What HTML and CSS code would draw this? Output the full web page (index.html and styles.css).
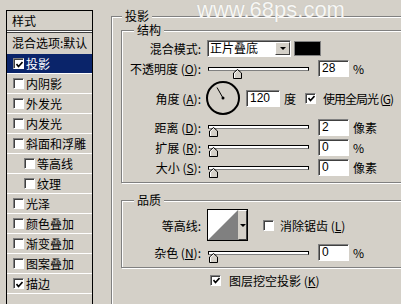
FILE: index.html
```html
<!DOCTYPE html>
<html>
  <head>
    <meta charset="utf-8">
    <title>图层样式 - 投影</title>
    <link rel="stylesheet" href="styles.css">
  </head>
  <body>
    <div class="styles">
      <div class="styles-head">样式</div>
      <div class="styles-blend">混合选项:默认</div>
      <div class="item selected"><span class="check"><svg width="7" height="7" viewBox="0 0 7 7"><polyline points="0.5,3 2.5,5.5 6.5,1" /></svg></span>投影</div>
      <div class="item"><span class="check"></span>内阴影</div>
      <div class="item"><span class="check"></span>外发光</div>
      <div class="item"><span class="check"></span>内发光</div>
      <div class="item"><span class="check"></span>斜面和浮雕</div>
      <div class="item sub"><span class="check"></span>等高线</div>
      <div class="item sub"><span class="check"></span>纹理</div>
      <div class="item"><span class="check"></span>光泽</div>
      <div class="item"><span class="check"></span>颜色叠加</div>
      <div class="item"><span class="check"></span>渐变叠加</div>
      <div class="item"><span class="check"></span>图案叠加</div>
      <div class="item"><span class="check"><svg width="7" height="7" viewBox="0 0 7 7"><polyline points="0.5,3 2.5,5.5 6.5,1" /></svg></span>描边</div>
      <div class="item"></div>
    </div>

    <fieldset class="group effect">
      <legend>投影</legend>

      <fieldset class="group structure">
        <legend>结构</legend>
        <div class="row row-mode">
          <span class="label">混合模式:</span>
          <div class="select"><span class="select-text">正片叠底</span><span class="drop"><i></i></span></div>
          <span class="swatch"></span>
        </div>
        <div class="row row-opacity">
          <span class="label">不透明度 (<u>O</u>):</span>
          <div class="slider"><span class="thumb" style="left: 24px"><svg width="9" height="10" viewBox="0 0 9 10"><polygon points="0.5,9.5 0.5,4 4.5,0.5 8.5,4 8.5,9.5" fill="#d4d0c8" stroke="#000" /><polyline points="1.5,9 1.5,4.4 4.5,1.8" fill="none" stroke="#fff" /></svg></span></div>
          <span class="field">28</span>
          <span class="unit">%</span>
        </div>
        <div class="row row-angle">
          <span class="label">角度 (<u>A</u>):</span>
          <svg class="dial" width="36" height="36" viewBox="0 0 36 36">
            <circle cx="18" cy="18" r="16" fill="none" stroke="#000" stroke-width="2" />
            <line x1="18" y1="18" x2="12" y2="7.5" stroke="#000" stroke-width="1" />
            <circle cx="18" cy="18" r="1.5" fill="#000" />
          </svg>
          <span class="field field-angle">120</span>
          <span class="unit">度</span>
          <span class="check global"><svg width="7" height="7" viewBox="0 0 7 7"><polyline points="0.5,3 2.5,5.5 6.5,1" /></svg></span>
          <span class="check-text tight">使用全局光 (<u>G</u>)</span>
        </div>
        <div class="row row-plain">
          <span class="label">距离 (<u>D</u>):</span>
          <div class="slider"><span class="thumb" style="left: 0"><svg width="9" height="10" viewBox="0 0 9 10"><polygon points="0.5,9.5 0.5,4 4.5,0.5 8.5,4 8.5,9.5" fill="#d4d0c8" stroke="#000" /><polyline points="1.5,9 1.5,4.4 4.5,1.8" fill="none" stroke="#fff" /></svg></span></div>
          <span class="field">2</span>
          <span class="unit">像素</span>
        </div>
        <div class="row row-plain">
          <span class="label">扩展 (<u>R</u>):</span>
          <div class="slider"><span class="thumb" style="left: 0"><svg width="9" height="10" viewBox="0 0 9 10"><polygon points="0.5,9.5 0.5,4 4.5,0.5 8.5,4 8.5,9.5" fill="#d4d0c8" stroke="#000" /><polyline points="1.5,9 1.5,4.4 4.5,1.8" fill="none" stroke="#fff" /></svg></span></div>
          <span class="field">0</span>
          <span class="unit">%</span>
        </div>
        <div class="row row-last">
          <span class="label">大小 (<u>S</u>):</span>
          <div class="slider"><span class="thumb" style="left: 0"><svg width="9" height="10" viewBox="0 0 9 10"><polygon points="0.5,9.5 0.5,4 4.5,0.5 8.5,4 8.5,9.5" fill="#d4d0c8" stroke="#000" /><polyline points="1.5,9 1.5,4.4 4.5,1.8" fill="none" stroke="#fff" /></svg></span></div>
          <span class="field">0</span>
          <span class="unit">像素</span>
        </div>
      </fieldset>

      <fieldset class="group quality">
        <legend>品质</legend>
        <div class="row row-contour">
          <span class="label">等高线:</span>
          <div class="contour">
            <svg width="30" height="30" viewBox="0 0 30 30"><rect width="30" height="30" fill="#fff" /><polygon points="0,30 30,0 30,30" fill="#808080" /></svg>
            <span class="contour-drop"><i></i></span>
          </div>
          <span class="check aa"></span>
          <span class="check-text">消除锯齿 (<u>L</u>)</span>
        </div>
        <div class="row row-noise">
          <span class="label">杂色 (<u>N</u>):</span>
          <div class="slider"><span class="thumb" style="left: 0"><svg width="9" height="10" viewBox="0 0 9 10"><polygon points="0.5,9.5 0.5,4 4.5,0.5 8.5,4 8.5,9.5" fill="#d4d0c8" stroke="#000" /><polyline points="1.5,9 1.5,4.4 4.5,1.8" fill="none" stroke="#fff" /></svg></span></div>
          <span class="field">0</span>
          <span class="unit">%</span>
        </div>
      </fieldset>

      <div class="row knockout">
        <span class="check"><svg width="7" height="7" viewBox="0 0 7 7"><polyline points="0.5,3 2.5,5.5 6.5,1" /></svg></span>
        <span class="check-text">图层挖空投影 (<u>K</u>)</span>
      </div>
    </fieldset>

    <div class="watermark">www.68ps.com</div>
  </body>
</html>
```

FILE: styles.css
```css
body {
  margin: 0;
  height: 304px;
  overflow: hidden;
  position: relative;
  display: flex;
  align-items: flex-start;
  background: #d4d0c8;
  color: #000;
  font: 12px "Noto Sans CJK SC", sans-serif;
}
u {
  text-decoration: underline;
}

/* style list on the left */
.styles {
  margin: 10px 0 0 6px;
  width: 87px;
  height: 320px;
  flex: none;
  box-sizing: border-box;
  border: 1px solid #000;
  border-bottom: none;
}
.styles-head {
  height: 19px;
  line-height: 19px;
  padding-left: 5px;
  border-bottom: 1px solid #404040;
  box-shadow: 0 1px #fff, 0 2px #404040;
  margin-bottom: 2px;
}
.styles-blend {
  height: 21px;
  line-height: 20px;
  padding-left: 5px;
  white-space: nowrap;
}
.item {
  height: 19px;
  display: flex;
  align-items: center;
  gap: 2px;
  padding-left: 6px;
  border-bottom: 1px solid #fff;
  white-space: nowrap;
}
.item.sub {
  padding-left: 17px;
}
.item.selected {
  background: #0a246a;
  color: #fff;
}

/* checkbox */
.check {
  width: 11px;
  height: 11px;
  flex: none;
  box-sizing: border-box;
  display: inline-flex;
  align-items: center;
  justify-content: center;
  background: #fff;
  border: 1px solid;
  border-color: #808080 #fff #fff #808080;
  box-shadow: inset 1px 1px #404040;
}
.check svg {
  margin: 1px 0 0 1px;
}
.check polyline {
  fill: none;
  stroke: #000;
  stroke-width: 1.6;
}

/* group boxes */
fieldset {
  margin: 0;
  padding: 0;
  min-width: 0;
}
.group {
  border: 1px solid #808080;
  box-shadow: inset 1px 1px #fff, 1px 1px #fff;
}
.group > legend {
  padding: 0 3px;
  line-height: 14px;
  background: #d4d0c8;
}
.effect {
  margin: 9px 0 0 18px;
  padding: 0 0 0 9px;
  width: 330px;
  height: 320px;
  flex: none;
  box-sizing: border-box;
}
.effect > legend {
  margin-left: 1px;
}
.structure {
  padding: 1px 0 4px;
}
.structure > legend,
.quality > legend {
  margin-left: 12px;
}
.quality {
  margin-top: 10px;
  padding: 0 0 5px;
}

/* form rows */
.row {
  display: flex;
  align-items: center;
  white-space: nowrap;
}
.row-mode { height: 20px; }
.row-opacity { height: 21px; }
.row-angle { height: 38px; }
.row-plain { height: 20px; }
.row-last { height: 21px; }
.row-contour { height: 36px; }
.row-noise { height: 19px; }
.label {
  width: 79px;
  flex: none;
  text-align: right;
}

.select {
  margin-left: 6px;
  width: 84px;
  height: 17px;
  box-sizing: border-box;
  display: flex;
  align-items: center;
  justify-content: space-between;
  background: #fff;
  border: 1px solid;
  border-color: #808080 #fff #fff #808080;
  box-shadow: inset 1px 1px #404040;
}
.select-text {
  padding-left: 2px;
  line-height: 14px;
}
.drop,
.contour-drop {
  width: 15px;
  height: 13px;
  box-sizing: border-box;
  display: flex;
  align-items: center;
  justify-content: center;
  background: #d4d0c8;
  border: 1px solid;
  border-color: #fff #404040 #404040 #fff;
}
.drop i,
.contour-drop i {
  width: 0;
  height: 0;
  border-left: 3px solid transparent;
  border-right: 3px solid transparent;
  border-top: 3px solid #000;
}
.swatch {
  margin-left: 3px;
  width: 27px;
  height: 15px;
  box-sizing: border-box;
  background: #000;
  border: 1px solid #808080;
}

.slider {
  position: relative;
  margin-left: 7px;
  width: 101px;
  height: 4px;
  box-sizing: border-box;
  background: #fff;
  border: 1px solid #000;
  border-bottom-color: #808080;
}
.thumb {
  position: absolute;
  top: 1px;
  display: block;
  line-height: 0;
}

.field {
  margin-left: 9px;
  width: 31px;
  height: 17px;
  box-sizing: border-box;
  padding-left: 3px;
  background: #fff;
  border: 1px solid;
  border-color: #808080 #fff #fff #808080;
  box-shadow: inset 1px 1px #404040;
  font: 12px "Liberation Sans", Arial, sans-serif;
  line-height: 15px;
}
.unit {
  margin-left: 4px;
}

.dial {
  margin-left: 4px;
  flex: none;
}
.field-angle {
  margin-left: 5px;
  width: 34px;
}
.check.global {
  margin-left: 9px;
}
.check-text {
  margin-left: 7px;
}
.check-text.tight {
  letter-spacing: -1px;
}

.contour {
  margin-left: 6px;
  width: 41px;
  height: 32px;
  box-sizing: border-box;
  display: flex;
  align-items: center;
  border: 1px solid #000;
  background: #fff;
}
.contour svg {
  display: block;
}
.contour-drop {
  width: 9px;
  height: 30px;
  border-color: #fff #404040 #404040 #d4d0c8;
}
.check.aa {
  margin-left: 15px;
}
.check.aa + .check-text {
  margin-left: 6px;
}

.knockout {
  margin-top: 2px;
  height: 20px;
  padding-left: 89px;
}
.knockout .check-text {
  margin-left: 8px;
}

/* site watermark over the dialog */
.watermark {
  position: absolute;
  top: 0;
  left: 197px;
  font: 22px "Liberation Sans", Arial, sans-serif;
  line-height: 20px;
  color: #f7f7f5;
  text-shadow: 0 0 1px #b8b5ae;
}
```
